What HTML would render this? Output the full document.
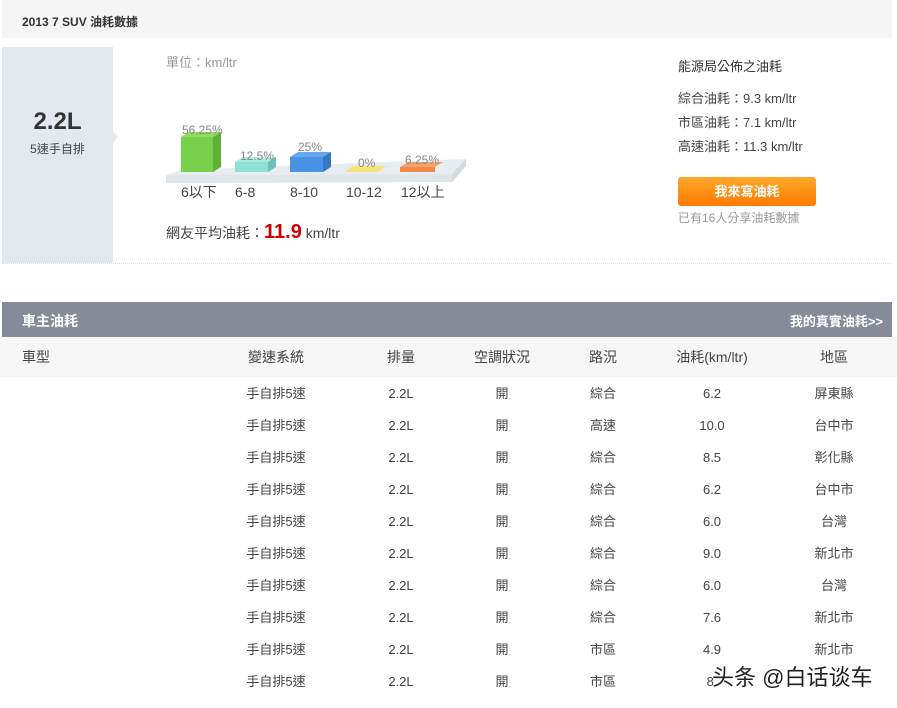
<!DOCTYPE html>
<html><head><meta charset="utf-8"><style>
body{margin:0;width:897px;height:708px;background:#fff;font-family:"Liberation Sans","Noto Sans CJK TC",sans-serif;position:relative;overflow:hidden;color:#333}
.a{position:absolute;white-space:nowrap}
.row{position:absolute;left:0;width:897px;height:32px;font-size:13px;color:#444}
.row span,.hd span{position:absolute;transform:translateX(-50%);top:8px;line-height:16px;height:16px}
</style></head><body>
<div class="a" style="left:2px;top:0;width:890px;height:38px;background:#f5f5f5"></div>
<div class="a" style="left:22px;top:13px;font-size:12px;font-weight:bold;color:#333">2013 7 SUV 油耗數據</div>
<div class="a" style="left:2px;top:47px;width:111px;height:216px;background:#e3e8ee"></div>
<div class="a" style="left:113px;top:131px;width:0;height:0;border-top:6px solid transparent;border-bottom:6px solid transparent;border-left:5px solid #e3e8ee"></div>
<div class="a" style="left:2px;top:108px;width:111px;text-align:center;font-size:24px;font-weight:bold;color:#333">2.2L</div>
<div class="a" style="left:2px;top:140px;width:111px;text-align:center;font-size:12px;color:#444">5速手自排</div>
<div class="a" style="left:166px;top:52px;font-size:13px;color:#999">單位：km/ltr</div>
<svg class="a" style="left:0;top:0" width="480" height="200">
<polygon points="180,170 466,159 452,174 166,175" fill="#e6ecef"/>
<polygon points="166,175 452,174 452,182 166,183" fill="#dfe6ea"/>
<polygon points="452,174 466,159 466,166 452,182" fill="#d3dbe0"/>
<polygon points="181,137 213,137 221,132 189,132" fill="#8fdc5e"/>
<rect x="181" y="137" width="32" height="35" fill="#79d04c"/>
<polygon points="213,137 221,132 221,167 213,172" fill="#5fb037"/>
<polygon points="235,162 268,162 276,157 243,157" fill="#a9ece3"/>
<rect x="235" y="162" width="33" height="10" fill="#8ee0d6"/>
<polygon points="268,162 276,157 276,167 268,172" fill="#6ec0b6"/>
<polygon points="290,157 323,157 331,152 298,152" fill="#65a8ee"/>
<rect x="290" y="157" width="33" height="15" fill="#4a93e4"/>
<polygon points="323,157 331,152 331,167 323,172" fill="#3577c4"/>
<polygon points="345,172 378,172 386,166 353,166" fill="#f6e27a"/>
<polygon points="400,167 435,167 443,162 408,162" fill="#f7a66a"/>
<rect x="400" y="167" width="35" height="5" fill="#ef8a4a"/>
<g font-size="12" fill="#888" font-family="Liberation Sans">
<text x="182" y="134">56.25%</text><text x="240" y="160">12.5%</text><text x="298" y="151">25%</text><text x="358" y="167">0%</text><text x="405" y="164">6.25%</text></g>
<g font-size="14" fill="#444" font-family="Liberation Sans,Noto Sans CJK TC">
<text x="181" y="197">6以下</text><text x="235" y="197">6-8</text><text x="290" y="197">8-10</text><text x="346" y="197">10-12</text><text x="401" y="197">12以上</text></g>
</svg>
<div class="a" style="left:166px;top:221px;font-size:14px;color:#444">網友平均油耗：<b style="color:#c00;font-size:20px">11.9</b> km/ltr</div>
<div class="a" style="left:678px;top:59px;font-size:13px;color:#333;line-height:16px">能源局公佈之油耗</div>
<div class="a" style="left:678px;top:87px;font-size:13px;color:#444;line-height:24px">綜合油耗：9.3 km/ltr<br>市區油耗：7.1 km/ltr<br>高速油耗：11.3 km/ltr</div>
<div class="a" style="left:678px;top:177px;width:138px;height:29px;border-radius:3px;background:linear-gradient(#ffa92a,#ff7a00);color:#fff;font-weight:bold;font-size:13px;text-align:center;line-height:29px">我來寫油耗</div>
<div class="a" style="left:678px;top:209px;font-size:12px;color:#999">已有16人分享油耗數據</div>
<div class="a" style="left:2px;top:263px;width:890px;border-top:1px dotted #ddd"></div>
<div class="a" style="left:2px;top:302px;width:890px;height:35px;background:#858b99"></div>
<div class="a" style="left:22px;top:311px;font-size:14px;font-weight:bold;color:#fff">車主油耗</div>
<div class="a" style="right:14px;top:311px;font-size:13px;font-weight:bold;color:#fff">我的真實油耗&gt;&gt;</div>
<div class="hd row" style="top:337px;height:40px;background:#f6f6f6;font-size:14px">
<span style="transform:none;left:22px;top:12px">車型</span><span style="left:276px;top:12px">變速系統</span><span style="left:401px;top:12px">排量</span><span style="left:502px;top:12px">空調狀況</span><span style="left:603px;top:12px">路況</span><span style="left:712px;top:12px">油耗(km/ltr)</span><span style="left:834px;top:12px">地區</span></div>
<div class="row" style="top:378px"><span style="left:276px">手自排5速</span><span style="left:401px">2.2L</span><span style="left:502px">開</span><span style="left:603px">綜合</span><span style="left:712px">6.2</span><span style="left:834px">屏東縣</span></div>
<div class="row" style="top:410px"><span style="left:276px">手自排5速</span><span style="left:401px">2.2L</span><span style="left:502px">開</span><span style="left:603px">高速</span><span style="left:712px">10.0</span><span style="left:834px">台中市</span></div>
<div class="row" style="top:442px"><span style="left:276px">手自排5速</span><span style="left:401px">2.2L</span><span style="left:502px">開</span><span style="left:603px">綜合</span><span style="left:712px">8.5</span><span style="left:834px">彰化縣</span></div>
<div class="row" style="top:474px"><span style="left:276px">手自排5速</span><span style="left:401px">2.2L</span><span style="left:502px">開</span><span style="left:603px">綜合</span><span style="left:712px">6.2</span><span style="left:834px">台中市</span></div>
<div class="row" style="top:506px"><span style="left:276px">手自排5速</span><span style="left:401px">2.2L</span><span style="left:502px">開</span><span style="left:603px">綜合</span><span style="left:712px">6.0</span><span style="left:834px">台灣</span></div>
<div class="row" style="top:538px"><span style="left:276px">手自排5速</span><span style="left:401px">2.2L</span><span style="left:502px">開</span><span style="left:603px">綜合</span><span style="left:712px">9.0</span><span style="left:834px">新北市</span></div>
<div class="row" style="top:570px"><span style="left:276px">手自排5速</span><span style="left:401px">2.2L</span><span style="left:502px">開</span><span style="left:603px">綜合</span><span style="left:712px">6.0</span><span style="left:834px">台灣</span></div>
<div class="row" style="top:602px"><span style="left:276px">手自排5速</span><span style="left:401px">2.2L</span><span style="left:502px">開</span><span style="left:603px">綜合</span><span style="left:712px">7.6</span><span style="left:834px">新北市</span></div>
<div class="row" style="top:634px"><span style="left:276px">手自排5速</span><span style="left:401px">2.2L</span><span style="left:502px">開</span><span style="left:603px">市區</span><span style="left:712px">4.9</span><span style="left:834px">新北市</span></div>
<div class="row" style="top:666px"><span style="left:276px">手自排5速</span><span style="left:401px">2.2L</span><span style="left:502px">開</span><span style="left:603px">市區</span><span style="left:712px">8.</span></div>
<div class="a" style="left:712px;top:660px;font-size:22px;color:#222;font-family:'Liberation Sans','Noto Sans CJK SC',sans-serif;text-shadow:0 0 2px #fff">头条 @白话谈车</div>
</body></html>
